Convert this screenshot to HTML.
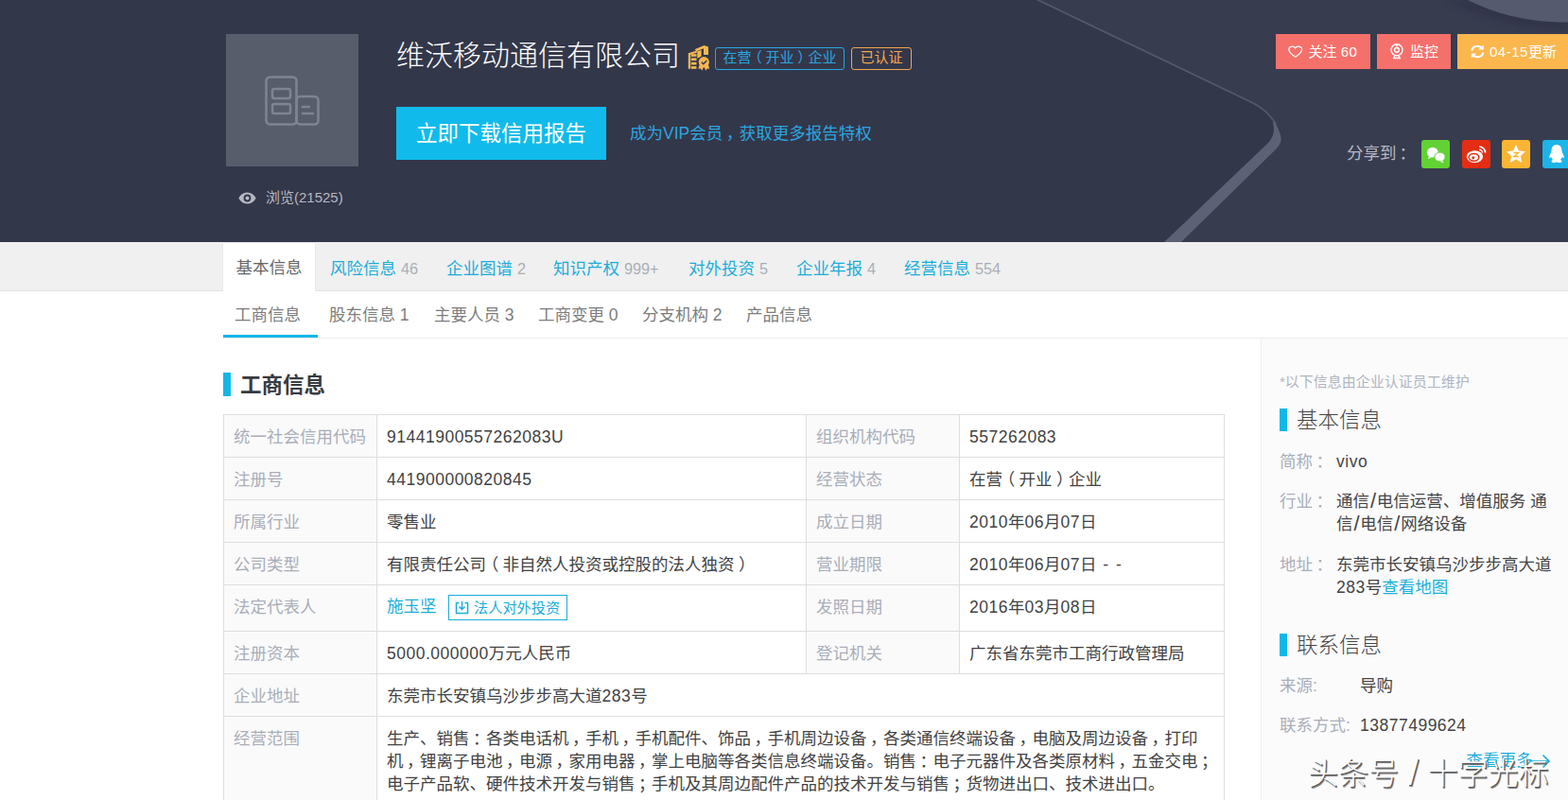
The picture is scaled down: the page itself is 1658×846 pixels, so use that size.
<!DOCTYPE html>
<html lang="zh-CN">
<head>
<meta charset="utf-8">
<title>维沃移动通信有限公司</title>
<style>
*{box-sizing:border-box;margin:0;padding:0}
html,body{width:1658px;height:846px;overflow:hidden;background:#fff}
body{font-family:"Liberation Sans","Noto Sans CJK SC",sans-serif;color:#333;position:relative;font-size:17.5px}
a{text-decoration:none;color:inherit}
.pc{position:relative;left:.2em}
.pl{position:relative;left:-.25em}
.pr{position:relative;left:.25em}
.n{letter-spacing:.5px}
.hd{position:absolute;left:0;top:0;width:1658px;height:256px;background:#33374a;overflow:hidden}
.hd svg.bg{position:absolute;left:0;top:0}
.logo{position:absolute;left:239px;top:36px;width:140px;height:140px;background:#585d6c}
.logo svg{position:absolute;left:41px;top:43.5px}
.view{position:absolute;left:252px;top:198px;height:22px;line-height:22px;color:#b5b8c2;font-size:15px;white-space:nowrap}
.view svg{position:absolute;left:0;top:5px}
.view span{position:absolute;left:29px;top:0}
h1{position:absolute;left:419px;top:39px;font-size:30px;line-height:40px;font-weight:300;color:#fff;white-space:nowrap}
.cert{position:absolute;left:727px;top:47px}
.tag{position:absolute;top:50px;height:24px;line-height:20px;border:1px solid;border-radius:3px;font-size:15px;text-align:center;white-space:nowrap}
.tag.t1{left:756px;width:137px;color:#2ba6e0;border-color:#2ba6e0}
.tag.t2{left:900px;width:64px;color:#f2a751;border-color:#f2a751}
.dl{position:absolute;left:419px;top:113px;width:222px;height:56px;line-height:58px;background:#10bbeb;color:#fff;font-size:22.5px;text-align:center;white-space:nowrap}
.vip{position:absolute;left:666px;top:127px;line-height:28px;font-size:17.5px;color:#2ba6e0;white-space:nowrap}
.btn{position:absolute;top:36px;height:37px;line-height:38px;color:#fff;font-size:15px;white-space:nowrap}
.btn.b1{left:1349px;width:100px;background:#f6706b}
.btn.b2{left:1456px;width:78px;background:#f6706b}
.btn.b3{left:1541px;width:130px;background:#fbb74e}
.btn svg{position:absolute;top:10px}
.btn>span{position:absolute;top:0}
.share{position:absolute;left:1424px;top:147.5px;line-height:28px;font-size:17.5px;color:#b5b8c2;white-space:nowrap}
.si{position:absolute;top:148px;width:30px;height:30px;border-radius:3px}
.nav{position:absolute;left:0;top:256px;width:1658px;height:52px;background:#f0f0f0;border-bottom:1px solid #e3e3e3}
.nav a{position:absolute;top:15px;line-height:26px;font-size:17.5px;color:#1badda;white-space:nowrap}
.nav a i{font-style:normal;font-size:16.25px;color:#a9afb8}
.nav .on{left:236px;top:1px;width:97px;height:51px;background:#fff;box-shadow:0 0 0 1px #e9e9e9;color:#666;text-align:center;line-height:52px}
.sub{position:absolute;left:0;top:308px;width:1658px;height:50px;background:#fff}
.sub:after{content:"";position:absolute;left:236px;right:0;top:49px;height:1px;background:#ededed}
.sub a{position:absolute;top:12px;line-height:26px;font-size:17.5px;color:#7d7d7d;white-space:nowrap}
.sub .bar{position:absolute;left:236px;top:45.5px;width:100px;height:4px;background:#12b7e8}
.main h2{position:absolute;left:236px;top:394px;height:25px;line-height:28px;padding-left:18px;font-size:22.5px;font-weight:700;color:#383b42;white-space:nowrap}
.main h2:before,.side h3:before{content:"";position:absolute;left:0;top:0;width:8px;height:25px;background:#12b7e8}
.side h3:before{height:24px}
table{position:absolute;left:236px;top:438px;width:1058px;border-collapse:collapse;table-layout:fixed;font-size:17.5px}
td{border:1px solid #dedede;height:45px;padding:1.5px 10px 0;vertical-align:middle;color:#424242;white-space:nowrap;line-height:24px}
td.l{background:#fafafa;color:#a9aeb8}
tr.r5 td{height:49px;padding:0 10px 2px}
tr.r8 td{vertical-align:top;padding-top:11.3px;height:120px}
.nm{color:#1badda}
.inv{display:inline-block;vertical-align:middle;margin-left:12px;height:27px;line-height:26.5px;border:1px solid #1badda;border-radius:0;padding:0 6.5px 0 6.5px;font-size:15.2px;color:#1badda;background:#fff}
.inv svg{vertical-align:-2px;margin-right:5px}
.side{position:absolute;left:1333px;top:358px;width:325px;height:488px;background:#fbfbfc;border-left:1px solid #efeff1}
.side *{position:absolute;white-space:nowrap}
.side span{position:relative}
.side .note{left:19px;top:35.5px;font-size:15px;line-height:20px;color:#b0b5bf}
.side h3{left:19px;height:24px;line-height:25px;padding-left:18px;font-size:22.5px;font-weight:300;color:#444}
.side .k{left:19px;font-size:17.5px;line-height:24px;color:#a9aeb8}
.side .v{font-size:17.5px;line-height:24px;color:#444}
.side .lk{color:#1badda}
.sl{font-size:1.25em;line-height:0;padding:0 .9px;position:relative;top:1px}
.wm{position:absolute;left:1383px;top:796px;font-size:32px;line-height:44px;font-weight:300;color:#fff;white-space:nowrap;text-shadow:1px 1px 0 #5a5a5a,1.6px 1.6px 1px #6a6a6a;word-spacing:1px}
.wm span{font-size:1.2em;line-height:0;position:relative;top:1px;font-weight:400}
.share .pc{left:.17em}
.ds{word-spacing:1px;letter-spacing:1px}
</style>
</head>
<body>
<div class="hd">
  <svg class="bg" width="1658" height="256" viewBox="0 0 1658 256">
    <defs>
      <linearGradient id="g2" x1="0" y1="0" x2="0" y2="1"><stop offset="0" stop-color="#2d3144"/><stop offset="1" stop-color="#393d51" stop-opacity="0"/></linearGradient>
      <filter id="bl" x="-20%" y="-50%" width="140%" height="250%"><feGaussianBlur stdDeviation="3"/></filter>
    </defs>
    <path d="M1097.600 0 L1322 107.500 C1340 116 1352 130 1354.500 145 C1355.500 151 1352 155 1348 159 L1249 256 L1658 256 L1658 0 Z" fill="#383c4f"/>
    <path d="M1095.500 -1 L1322 107.500 C1334 113 1343 121 1349 131" fill="none" stroke="#53586d" stroke-width="1.800"/>
    <path d="M1347.500 128 C1351 134 1353.500 140 1354.500 145 C1355.500 151 1352 155 1348 159 L1249 256 L1231 256 L1340 152 C1346 146 1348.500 139 1346 130 Z" fill="#5c6176"/>
    <path d="M1530 0 C1570 22 1615 32 1658 32 L1658 0 Z" fill="#30344a" filter="url(#bl)"/>
    <path d="M1552 0 C1580 14 1615 24 1658 23.500 L1658 0 Z" fill="#555a6e"/>
  </svg>
  <div class="logo">
    <svg width="58" height="54" viewBox="0 0 58 54" fill="none" stroke="#7f8492" stroke-width="2.500">
      <rect x="1.500" y="1.500" width="32" height="50" rx="4"/>
      <rect x="8" y="14" width="19" height="10" rx="2"/>
      <rect x="8" y="30" width="19" height="10" rx="2"/>
      <rect x="33.500" y="22" width="23" height="29.500" rx="4"/>
      <path d="M39 33h9M39 40h13"/>
    </svg>
  </div>
  <div class="view">
    <svg width="19" height="13" viewBox="0 0 19 13"><path d="M0.300 6.500C2.500 2.500 5.800 0.500 9.500 0.500s7 2 9.200 6c-2.200 4-5.500 6-9.200 6s-7-2-9.200-6z" fill="#b5b8c2"/><circle cx="9.500" cy="6.500" r="3.900" fill="#33374a"/><circle cx="9.500" cy="6.500" r="2" fill="#b5b8c2"/></svg>
    <span>浏览(21525)</span>
  </div>
  <h1>维沃移动通信有限公司</h1>
  <svg class="cert" width="24" height="28" viewBox="0 0 24 28">
    <g fill="#f5b84f">
      <path d="M0.800 9.200L9.800 6.600V8.800L3.200 10.700V25.800H0.800Z"/>
      <rect x="3.900" y="10.200" width="5.600" height="2.600"/>
      <rect x="3.900" y="14.400" width="5.600" height="2.700"/>
      <rect x="3.900" y="18.800" width="5.600" height="2.700"/>
      <rect x="3.900" y="23.100" width="5.600" height="2.700"/>
      <path d="M7.500 5.200L17.500 1L22 2.500V11h-5V4.200L9.500 7.300Z"/>
      <path d="M10.300 7.200L14.600 6v6.500l-4.300 2.300Z"/>
      <circle cx="17.300" cy="18.600" r="5.600"/>
      <path d="M12.600 21.500L11.300 25.800l2.600-.3 1.300 2.200 2.100-4.200 2.100 4.200 1.300-2.200 2.600.3-1.300-4.300Z"/>
    </g>
    <path d="M14.800 18.800l2 1.900 3.500-3.700" fill="none" stroke="#33374a" stroke-width="1.500"/>
  </svg>
  <div class="tag t1">在营<span class="pl">（</span>开业<span class="pr">）</span>企业</div>
  <div class="tag t2">已认证</div>
  <a class="dl">立即下载信用报告</a>
  <a class="vip">成为VIP会员<span class="pc">，</span>获取更多报告特权</a>
  <a class="btn b1"><svg style="left:13px;top:11.5px" width="15.500" height="13.500" viewBox="0 0 17 16" preserveAspectRatio="none"><path d="M8.500 14.500C3 10.500 1 8 1 5.300 1 3 2.800 1.200 5 1.200c1.500 0 2.800.8 3.500 2 .7-1.200 2-2 3.500-2 2.200 0 4 1.800 4 4.100 0 2.700-2 5.200-7.500 9.200z" fill="none" stroke="#fff" stroke-width="1.500"/></svg><span style="left:34.500px">关注 <span class="n">60</span></span></a>
  <a class="btn b2"><svg style="left:13px;top:10px" width="16" height="17" viewBox="0 0 16 17"><circle cx="8" cy="6.800" r="6" fill="none" stroke="#fff" stroke-width="1.500"/><circle cx="8" cy="6.800" r="2.400" fill="none" stroke="#fff" stroke-width="1.500"/><path d="M8 1v2.500" stroke="#fff" stroke-width="1.300"/><path d="M4 15.500h8M6 13.200l-1 2M10 13.200l1 2" fill="none" stroke="#fff" stroke-width="1.500"/></svg><span style="left:35px">监控</span></a>
  <a class="btn b3"><svg style="left:12.500px;top:10.500px" width="16.500" height="15" viewBox="0 0 18 18" preserveAspectRatio="none"><path d="M2.500 8A6.500 6.500 0 0 1 14 4.500M15.500 10A6.500 6.500 0 0 1 4 13.500" fill="none" stroke="#fff" stroke-width="2.400"/><path d="M16 0.500v6h-6zM2 17.500v-6h6z" fill="#fff"/></svg><span style="left:34px"><span class="n">04-15</span>更新</span></a>
  <div class="share">分享到<span class="pc">：</span></div>
  <div class="si" style="left:1503px;background:#62d134"><svg width="30" height="30" viewBox="0 0 30 30"><ellipse cx="11.800" cy="13.200" rx="5.900" ry="5.400" fill="#fff"/><path d="M8 17l-1 3 3.500-1.500z" fill="#fff"/><ellipse cx="19.500" cy="18" rx="5.600" ry="4.900" fill="#fff" stroke="#62d134" stroke-width="1"/><path d="M22 22l1.500 2.200-3.500-1z" fill="#fff"/></svg></div>
  <div class="si" style="left:1546px;background:#e42d12"><svg width="30" height="30" viewBox="0 0 30 30"><ellipse cx="13.400" cy="17.600" rx="8.600" ry="6.400" fill="#fff"/><ellipse cx="12.500" cy="18.300" rx="5.400" ry="3.900" fill="none" stroke="#e42d12" stroke-width="1.500"/><circle cx="11.800" cy="18.800" r="1.500" fill="#e42d12"/><path d="M18 7a6.500 6.500 0 0 1 6.500 6.500" fill="none" stroke="#fff" stroke-width="1.700"/><path d="M18.200 10.200a3.300 3.300 0 0 1 3.300 3.300" fill="none" stroke="#fff" stroke-width="1.400"/></svg></div>
  <div class="si" style="left:1588px;background:#fbb535"><svg width="30" height="30" viewBox="0 0 30 30"><path d="M15 5l3 6.500 7 .8-5.200 4.800 1.500 7L15 20.500 8.700 24.100l1.500-7L5 12.300l7-.8z" fill="#fff"/><path d="M12.500 13.500h5l-4.500 4h5" fill="none" stroke="#fbb535" stroke-width="1.500"/></svg></div>
  <div class="si" style="left:1631px;background:#1db4e8"><svg width="30" height="30" viewBox="0 0 30 30"><path d="M15 5c-3.500 0-5.500 2.800-5.500 6.500 0 1-.2 1.500-1 3-1 1.800-1.500 3.500-1 4.500.5.500 1.200-.3 1.800-1.200.2 1.500 1 2.500 1.700 3.200-1 .5-1.500 1-1.500 1.700 0 1 1.800 1.300 3.300 1.300 1 0 1.800-.2 2.200-.7.400.5 1.200.7 2.200.7 1.500 0 3.300-.3 3.300-1.300 0-.7-.5-1.200-1.500-1.700.7-.7 1.500-1.700 1.700-3.200.6.900 1.300 1.700 1.800 1.200.5-1 0-2.700-1-4.500-.8-1.500-1-2-1-3C20.500 7.800 18.500 5 15 5z" fill="#fff"/></svg></div>
</div>
<div class="nav">
  <a class="on">基本信息</a>
  <a style="left:349px">风险信息 <i>46</i></a>
  <a style="left:472px">企业图谱 <i>2</i></a>
  <a style="left:585px">知识产权 <i>999+</i></a>
  <a style="left:728px">对外投资 <i>5</i></a>
  <a style="left:842px">企业年报 <i>4</i></a>
  <a style="left:956px">经营信息 <i>554</i></a>
</div>
<div class="sub">
  <a style="left:248px">工商信息</a>
  <a style="left:348px">股东信息 1</a>
  <a style="left:459px">主要人员 3</a>
  <a style="left:569px">工商变更 0</a>
  <a style="left:679px">分支机构 2</a>
  <a style="left:789px">产品信息</a>
  <div class="bar"></div>
</div>
<div class="main">
  <h2>工商信息</h2>
  <table>
    <colgroup><col style="width:162px"><col style="width:454px"><col style="width:162px"><col style="width:280px"></colgroup>
    <tr><td class="l">统一社会信用代码</td><td><span class="n">91441900557262083U</span></td><td class="l">组织机构代码</td><td><span class="n">557262083</span></td></tr>
    <tr><td class="l">注册号</td><td><span class="n">441900000820845</span></td><td class="l">经营状态</td><td>在营<span class="pl">（</span>开业<span class="pr">）</span>企业</td></tr>
    <tr><td class="l">所属行业</td><td>零售业</td><td class="l">成立日期</td><td><span class="n">2010</span>年<span class="n">06</span>月<span class="n">07</span>日</td></tr>
    <tr><td class="l">公司类型</td><td>有限责任公司<span class="pl">（</span>非自然人投资或控股的法人独资<span class="pr">）</span></td><td class="l">营业期限</td><td><span class="n">2010</span>年<span class="n">06</span>月<span class="n">07</span>日<span class="ds"> - -</span></td></tr>
    <tr class="r5"><td class="l">法定代表人</td><td><a class="nm">施玉坚</a><a class="inv"><svg width="15" height="14" viewBox="0 0 15 14"><path d="M4.500 1.500H1.500v11h12v-11h-3" fill="none" stroke="#1badda" stroke-width="1.500"/><path d="M7.500 0v8M4.500 5.500l3 3 3-3" fill="none" stroke="#1badda" stroke-width="1.500"/></svg>法人对外投资</a></td><td class="l">发照日期</td><td><span class="n">2016</span>年<span class="n">03</span>月<span class="n">08</span>日</td></tr>
    <tr><td class="l">注册资本</td><td><span class="n">5000.000000</span>万元人民币</td><td class="l">登记机关</td><td>广东省东莞市工商行政管理局</td></tr>
    <tr><td class="l">企业地址</td><td colspan="3">东莞市长安镇乌沙步步高大道<span class="n">283</span>号</td></tr>
    <tr class="r8"><td class="l">经营范围</td><td colspan="3">生产、销售<span class="pc">：</span>各类电话机<span class="pc">，</span>手机<span class="pc">，</span>手机配件、饰品<span class="pc">，</span>手机周边设备<span class="pc">，</span>各类通信终端设备<span class="pc">，</span>电脑及周边设备<span class="pc">，</span>打印<br>机<span class="pc">，</span>锂离子电池<span class="pc">，</span>电源<span class="pc">，</span>家用电器<span class="pc">，</span>掌上电脑等各类信息终端设备。销售<span class="pc">：</span>电子元器件及各类原材料<span class="pc">，</span>五金交电<span class="pc">；</span><br>电子产品软、硬件技术开发与销售<span class="pc">；</span>手机及其周边配件产品的技术开发与销售<span class="pc">；</span>货物进出口、技术进出口。</td></tr>
  </table>
</div>
<div class="side">
  <div class="note">*以下信息由企业认证员工维护</div>
  <h3 style="top:74px">基本信息</h3>
  <div class="k" style="top:118px">简称<span class="pc">：</span></div><div class="v" style="left:79px;top:118px"><span class="n">vivo</span></div>
  <div class="k" style="top:160px">行业<span class="pc">：</span></div><div class="v" style="left:79px;top:160px">通信<span class="sl">/</span>电信运营、增值服务 通<br>信<span class="sl">/</span>电信<span class="sl">/</span>网络设备</div>
  <div class="k" style="top:227px">地址<span class="pc">：</span></div><div class="v" style="left:79px;top:227px">东莞市长安镇乌沙步步高大道<br><span class="n">283</span>号<a class="lk" style="position:static">查看地图</a></div>
  <h3 style="top:312px">联系信息</h3>
  <div class="k" style="top:355px">来源:</div><div class="v" style="left:104px;top:355px">导购</div>
  <div class="k" style="top:397px">联系方式:</div><div class="v" style="left:104px;top:397px"><span class="n">13877499624</span></div>
  <a class="lk" style="left:216.500px;top:435px;font-size:17.5px;line-height:22px">查看更多</a>
  <svg style="left:284px;top:439px" width="22" height="16" viewBox="0 0 22 16"><path d="M1 8h19M13.500 1.500L20 8l-6.500 6.500" fill="none" stroke="#1badda" stroke-width="1.600"/></svg>
</div>
<div class="wm">头条号 <span>/</span> 十字光标</div>
</body>
</html>
